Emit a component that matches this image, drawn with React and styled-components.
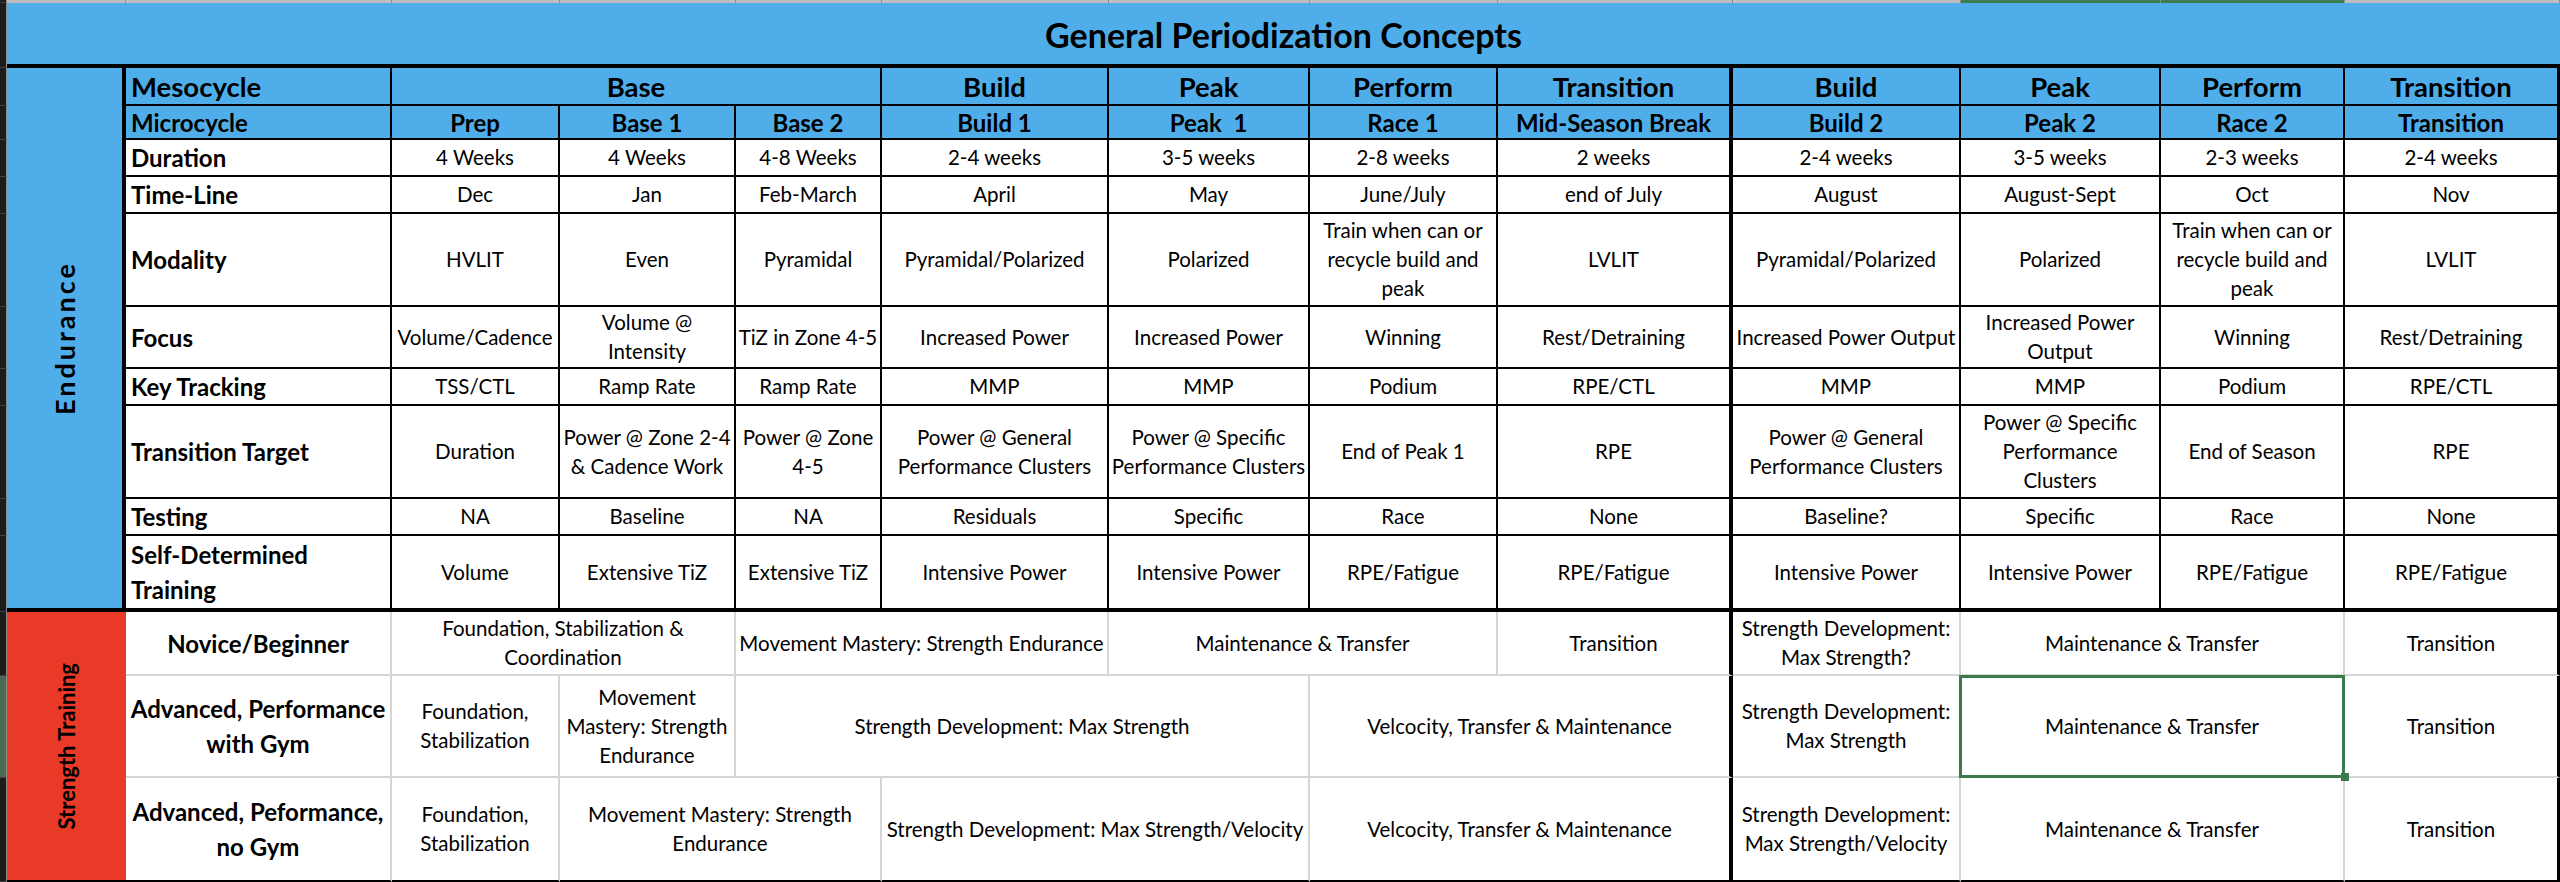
import React from 'react';
import styled, { createGlobalStyle } from 'styled-components';

const GlobalStyle = createGlobalStyle`
  html, body { margin: 0; padding: 0; background: #ffffff; }
  body { font-family: Lato, "Liberation Sans", sans-serif; color: #000; }
`;

const BLUE = '#4FAEEA';
const RED = '#E93A28';
const GRID = '#d6d6d6';

const COLS = [7, 119, 266, 168, 176, 146, 227, 201, 188, 235, 228, 200, 184, 215];
const ROWS = [3, 65, 38, 34, 37, 37, 93, 62, 37, 93, 37, 76, 64, 102, 104];
const DATA_COL = 4;

const border = (kind) => {
  switch (kind) {
    case 'thin': return '2px solid #000';
    case 'thick': return '4px solid #000';
    case 'edge': return '3px solid #000';
    case 'grid': return `2px solid ${GRID}`;
    default: return 'none';
  }
};

const Sheet = styled.div`
  display: grid;
  grid-template-columns: ${COLS.map((c) => `${c}px`).join(' ')};
  grid-template-rows: ${ROWS.map((r) => `${r}px`).join(' ')};
  width: 2560px;
  height: 882px;
  overflow: hidden;
  background: #fff;
`;

const Cell = styled.div`
  grid-column: ${(p) => p.$col} / span ${(p) => p.$span || 1};
  grid-row: ${(p) => p.$row} / span ${(p) => p.$rspan || 1};
  box-sizing: border-box;
  border-right: ${(p) => border(p.$r)};
  border-bottom: ${(p) => border(p.$b)};
  display: flex;
  align-items: center;
  min-width: 0;
  min-height: 0;
  white-space: pre-line;
  position: relative;
`;

const StripCell = styled(Cell)`
  background: ${(p) => (p.$selected ? '#4b6a53' : '#1c1c1c')};
  border-right: 1px solid #8d8d8d;
  border-bottom: 1px solid #404040;
`;

const TopCell = styled(Cell)`
  background: ${(p) => (p.$selected ? '#3f7d51' : '#bdbdbd')};
  border-right: 1px solid ${(p) => (p.$selected ? '#6f9e7c' : '#8a8a8a')};
`;

const Title = styled(Cell)`
  background: ${BLUE};
  justify-content: center;
  font-weight: 700;
  font-size: 34px;
  padding-top: 2px;
`;

const HeadLabel = styled(Cell)`
  background: ${BLUE};
  font-weight: 700;
  font-size: ${(p) => p.$size}px;
  padding-left: 5px;
`;

const HeadCell = styled(Cell)`
  background: ${BLUE};
  justify-content: center;
  font-weight: 700;
  font-size: ${(p) => p.$size}px;
`;

const RowLabel = styled(Cell)`
  background: #fff;
  font-weight: 700;
  font-size: 24px;
  line-height: 35px;
  padding-left: 5px;
`;

const DataCell = styled(Cell)`
  background: #fff;
  justify-content: center;
  text-align: center;
  font-size: 20.5px;
  line-height: 29px;
`;

const StrengthLabel = styled(Cell)`
  background: #fff;
  justify-content: center;
  text-align: center;
  font-weight: 700;
  font-size: 24px;
  line-height: 35px;
`;

const StrengthCell = styled(DataCell)`
  &::after {
    content: '';
    display: ${(p) => (p.$selected ? 'block' : 'none')};
    position: absolute;
    top: -1px;
    left: -2px;
    right: -2px;
    bottom: -2px;
    border: 3px solid #3c7a4c;
    z-index: 2;
  }
  &::before {
    content: '';
    display: ${(p) => (p.$selected ? 'block' : 'none')};
    position: absolute;
    right: -6px;
    bottom: -5px;
    width: 8px;
    height: 8px;
    background: #3c7a4c;
    z-index: 3;
  }
`;

const SideCell = styled(Cell)`
  background: ${(p) => p.$bg};
  justify-content: center;
`;

const SideText = styled.span`
  writing-mode: vertical-rl;
  transform: rotate(180deg);
  font-weight: 700;
  font-size: ${(p) => p.$size}px;
  letter-spacing: ${(p) => p.$spacing || 0}px;
  white-space: nowrap;
`;

const rightKind = (endIdx, strength) => {
  if (endIdx === 6) return 'thick';
  if (endIdx === 10) return 'edge';
  return strength ? 'grid' : 'thin';
};

const meso = [
  ['Base', 3], ['Build', 1], ['Peak', 1], ['Perform', 1], ['Transition', 1],
  ['Build', 1], ['Peak', 1], ['Perform', 1], ['Transition', 1],
];

const micro = [
  'Prep', 'Base 1', 'Base 2', 'Build 1', 'Peak\u00a0 1', 'Race 1', 'Mid-Season Break',
  'Build 2', 'Peak 2', 'Race 2', 'Transition',
];

const bodyRows = [
  ['Duration', ['4 Weeks', '4 Weeks', '4-8 Weeks', '2-4 weeks', '3-5 weeks', '2-8 weeks', '2 weeks', '2-4 weeks', '3-5 weeks', '2-3 weeks', '2-4 weeks']],
  ['Time-Line', ['Dec', 'Jan', 'Feb-March', 'April', 'May', 'June/July', 'end of July', 'August', 'August-Sept', 'Oct', 'Nov']],
  ['Modality', ['HVLIT', 'Even', 'Pyramidal', 'Pyramidal/Polarized', 'Polarized', 'Train when can or\nrecycle build and\npeak', 'LVLIT', 'Pyramidal/Polarized', 'Polarized', 'Train when can or\nrecycle build and\npeak', 'LVLIT']],
  ['Focus', ['Volume/Cadence', 'Volume @\nIntensity', 'TiZ in Zone 4-5', 'Increased Power', 'Increased Power', 'Winning', 'Rest/Detraining', 'Increased Power Output', 'Increased Power\nOutput', 'Winning', 'Rest/Detraining']],
  ['Key Tracking', ['TSS/CTL', 'Ramp Rate', 'Ramp Rate', 'MMP', 'MMP', 'Podium', 'RPE/CTL', 'MMP', 'MMP', 'Podium', 'RPE/CTL']],
  ['Transition Target', ['Duration', 'Power @ Zone 2-4\n& Cadence Work', 'Power @ Zone\n4-5', 'Power @ General\nPerformance Clusters', 'Power @ Specific\nPerformance Clusters', 'End of Peak 1', 'RPE', 'Power @ General\nPerformance Clusters', 'Power @ Specific\nPerformance\nClusters', 'End of Season', 'RPE']],
  ['Testing', ['NA', 'Baseline', 'NA', 'Residuals', 'Specific', 'Race', 'None', 'Baseline?', 'Specific', 'Race', 'None']],
  ['Self-Determined\nTraining', ['Volume', 'Extensive TiZ', 'Extensive TiZ', 'Intensive Power', 'Intensive Power', 'RPE/Fatigue', 'RPE/Fatigue', 'Intensive Power', 'Intensive Power', 'RPE/Fatigue', 'RPE/Fatigue']],
];

const strengthRows = [
  ['Novice/Beginner', [
    ['Foundation, Stabilization &\nCoordination', 2],
    ['Movement Mastery: Strength Endurance', 2],
    ['Maintenance & Transfer', 2],
    ['Transition', 1],
    ['Strength Development:\nMax Strength?', 1],
    ['Maintenance & Transfer', 2],
    ['Transition', 1],
  ]],
  ['Advanced, Performance\nwith Gym', [
    ['Foundation,\nStabilization', 1],
    ['Movement\nMastery: Strength\nEndurance', 1],
    ['Strength Development: Max Strength', 3],
    ['Velcocity, Transfer & Maintenance', 2],
    ['Strength Development:\nMax Strength', 1],
    ['Maintenance & Transfer', 2, true],
    ['Transition', 1],
  ]],
  ['Advanced, Peformance,\nno Gym', [
    ['Foundation,\nStabilization', 1],
    ['Movement Mastery: Strength\nEndurance', 2],
    ['Strength Development: Max Strength/Velocity', 2],
    ['Velcocity, Transfer & Maintenance', 2],
    ['Strength Development:\nMax Strength/Velocity', 1],
    ['Maintenance & Transfer', 2],
    ['Transition', 1],
  ]],
];

export default function App() {
  const cells = [];

  ROWS.forEach((_, i) => {
    cells.push(<StripCell key={`s${i}`} $col={1} $row={i + 1} $selected={i === 13} />);
  });

  for (let c = 2; c <= COLS.length; c += 1) {
    cells.push(<TopCell key={`t${c}`} $col={c} $row={1} $selected={c === 12 || c === 13} />);
  }

  cells.push(
    <Title key="title" $col={2} $span={13} $row={2} $b="thick">
      General Periodization Concepts
    </Title>
  );

  cells.push(
    <SideCell key="endur" $col={2} $row={3} $rspan={10} $bg={BLUE} $r="thick" $b="thick">
      <SideText $size={27} $spacing={3}>Endurance</SideText>
    </SideCell>
  );
  cells.push(
    <SideCell key="str" $col={2} $row={13} $rspan={3} $bg={RED} $b="thin">
      <SideText $size={22}>Strength Training</SideText>
    </SideCell>
  );

  cells.push(<HeadLabel key="mesoL" $size={27.5} $col={3} $row={3} $r="thin" $b="thin">Mesocycle</HeadLabel>);
  let idx = 0;
  meso.forEach(([label, span], k) => {
    const end = idx + span - 1;
    cells.push(
      <HeadCell key={`meso${k}`} $size={27.5} $col={DATA_COL + idx} $span={span} $row={3} $r={rightKind(end, false)} $b="thin">
        {label}
      </HeadCell>
    );
    idx += span;
  });

  cells.push(<HeadLabel key="microL" $size={24} $col={3} $row={4} $r="thin" $b="thin">Microcycle</HeadLabel>);
  micro.forEach((label, i) => {
    cells.push(
      <HeadCell key={`micro${i}`} $size={24} $col={DATA_COL + i} $row={4} $r={rightKind(i, false)} $b="thin">
        {label}
      </HeadCell>
    );
  });

  bodyRows.forEach(([label, values], r) => {
    const row = 5 + r;
    const b = r === bodyRows.length - 1 ? 'thick' : 'thin';
    cells.push(<RowLabel key={`bl${r}`} $col={3} $row={row} $r="thin" $b={b}>{label}</RowLabel>);
    values.forEach((v, i) => {
      cells.push(
        <DataCell key={`b${r}-${i}`} $col={DATA_COL + i} $row={row} $r={rightKind(i, false)} $b={b}>
          {v}
        </DataCell>
      );
    });
  });

  strengthRows.forEach(([label, items], r) => {
    const row = 13 + r;
    const b = r === strengthRows.length - 1 ? 'thin' : 'grid';
    cells.push(<StrengthLabel key={`sl${r}`} $col={3} $row={row} $r="grid" $b={b}>{label}</StrengthLabel>);
    let j = 0;
    items.forEach(([text, span, selected], k) => {
      const end = j + span - 1;
      cells.push(
        <StrengthCell
          key={`sc${r}-${k}`}
          $col={DATA_COL + j}
          $span={span}
          $row={row}
          $r={rightKind(end, true)}
          $b={b}
          $selected={!!selected}
        >
          {text}
        </StrengthCell>
      );
      j += span;
    });
  });

  return (
    <>
      <GlobalStyle />
      <Sheet>{cells}</Sheet>
    </>
  );
}
